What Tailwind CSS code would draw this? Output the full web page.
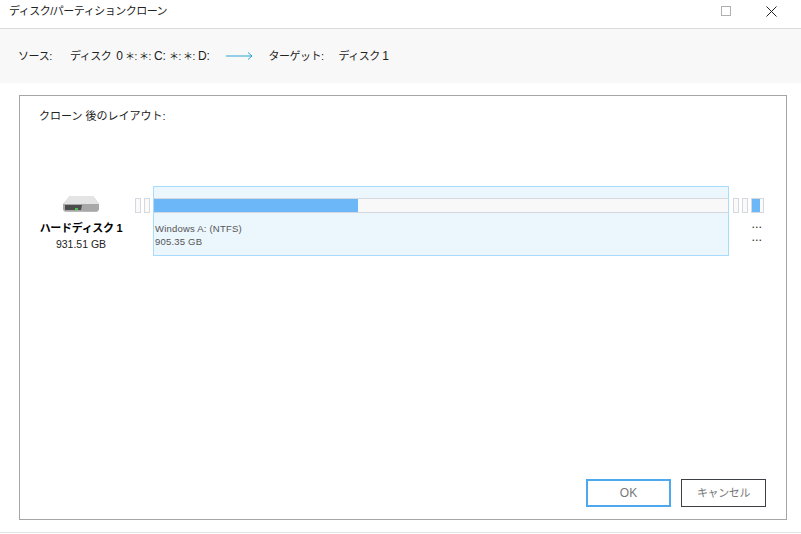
<!DOCTYPE html>
<html lang="ja">
<head>
<meta charset="utf-8">
<script src="https://cdn.jsdelivr.net/npm/@tailwindcss/browser@4"></script>
</head>
<body class="w-[801px] h-[534px] overflow-hidden bg-white text-[#222] font-['Liberation_Sans','Noto_Sans_CJK_JP',sans-serif]">
<div class="flex flex-col h-[534px]">
  <div class="h-[29px] shrink-0 border-b border-[#dcdcdc] flex items-center pl-[9px] pb-[6px] text-[11px] tracking-[-0.5px] leading-[20px]">
    <span>ディスク/パーティションクローン</span>
    <div class="ml-auto flex items-center">
      <svg width="10" height="10" viewBox="0 0 10 10" class="mr-[35px]"><rect x="0.5" y="0.5" width="9" height="9" fill="none" stroke="#b0b0b0"/></svg>
      <svg width="11" height="11" viewBox="0 0 11 11" class="mr-[24px]"><path d="M0.5 0.5L10.5 10.5M10.5 0.5L0.5 10.5" stroke="#222" stroke-width="1"/></svg>
    </div>
  </div>
  <div class="h-[54px] shrink-0 bg-[#f8f8f8] flex items-center pl-[18px] text-[11px]">
    <span class="w-[52px] tracking-[-0.4px]">ソース:</span>
    <span class="w-[156px] whitespace-nowrap"><span class="tracking-[-0.5px]">ディスク</span> <span class="text-[12px] ml-[2px]">0</span> <span class="text-[10px] tracking-[-0.5px] ml-[-1px]">＊: ＊:</span> <span class="text-[12px]">C:</span> <span class="text-[10px] tracking-[-0.5px]">＊: ＊:</span> <span class="text-[12px]">D:</span></span>
    <svg width="28" height="8" viewBox="0 0 28 8" class="ml-[-0.5px] mr-[15px]"><path d="M0 4H26M22 0.5L26 4L22 7.5" fill="none" stroke="#2ba6d6" stroke-width="1"/></svg>
    <span class="w-[70px] tracking-[-0.5px]">ターゲット:</span>
    <span class="tracking-[-0.5px]">ディスク <span class="text-[12px]">1</span></span>
  </div>
  <div class="mt-[12px] ml-[19px] w-[768px] h-[425px] shrink-0 border border-[#a5a5a5] flex flex-col">
    <div class="pl-[19px] pt-[11px] text-[11px] leading-[18px]">クローン 後のレイアウト:</div>
    <div class="mt-[61px] flex items-start">
      <div class="w-[107px] flex flex-col items-center pl-[15px] pt-[9px]">
        <svg width="38" height="18" viewBox="0 0 38 18">
          <path d="M8 1H31L37 9V15L35 17H3L1 15V9Z" fill="#b8b8b8"/>
          <path d="M8 1H31L37 9H1Z" fill="#e4e4e4"/>
          <path d="M1 9H37V14L35 16H3L1 14Z" fill="#a8a8a8"/>
          <path d="M3 10H20L19 15H3Z" fill="#4c4c4c"/>
          <rect x="13" y="13" width="3" height="2" fill="#4cc24c"/>
        </svg>
        <div class="mt-[7px] text-[11px] leading-[16px] font-bold tracking-[-0.3px] text-black whitespace-nowrap">ハードディスク 1</div>
        <div class="text-[10.5px] leading-[16px] whitespace-nowrap">931.51 GB</div>
      </div>
      <div class="mt-[12px] ml-[8px] flex gap-[3px]">
        <div class="w-[6px] h-[15px] border border-[#d5d8de] bg-[#fafafa]"></div>
        <div class="w-[6px] h-[15px] border border-[#d5d8de] bg-[#fafafa]"></div>
      </div>
      <div class="ml-[3px] w-[576px] h-[70px] border border-[#a8dcff] bg-[#ebf6fd]">
        <div class="mt-[11px] h-[15px] border-y border-[#d5d8de] bg-[#f8f8f8]">
          <div class="h-full w-[204px] bg-[#6bb7f8]"></div>
        </div>
        <div class="mt-[9px] pl-[1px] text-[9.5px] leading-[13px] tracking-[0.2px] text-[#555]">
          <div>Windows A: (NTFS)</div>
          <div>905.35 GB</div>
        </div>
      </div>
      <div class="ml-[4px] mt-[12px] w-[32px] flex flex-col">
        <div class="flex gap-[3px]">
          <div class="w-[6px] h-[15px] border border-[#d5d8de] bg-[#fafafa]"></div>
          <div class="w-[6px] h-[15px] border border-[#d5d8de] bg-[#fafafa]"></div>
          <div class="w-[13px] h-[15px] border border-[#d5d8de] bg-[#fafafa]">
            <div class="h-full w-[8px] bg-[#6bb7f8]"></div>
          </div>
        </div>
        <div class="pl-[19px] mt-[6px] text-[9px] leading-[13px] tracking-[1px] font-bold text-[#333]">
          <div>...</div>
          <div>...</div>
        </div>
      </div>
    </div>
    <div class="mt-auto mb-[12px] mr-[20px] flex justify-end gap-[10px] text-[12px]">
      <div class="w-[85px] h-[28px] border-2 border-[#4ea8ee] flex items-center justify-center text-[#777]">OK</div>
      <div class="w-[85px] h-[28px] border border-[#3c4045] flex items-center justify-center text-[#777] text-[11px] tracking-[-0.4px]">キャンセル</div>
    </div>
  </div>
  <div class="mt-[12px] h-px bg-[#e3e8ea]"></div>
</div>
</body>
</html>
